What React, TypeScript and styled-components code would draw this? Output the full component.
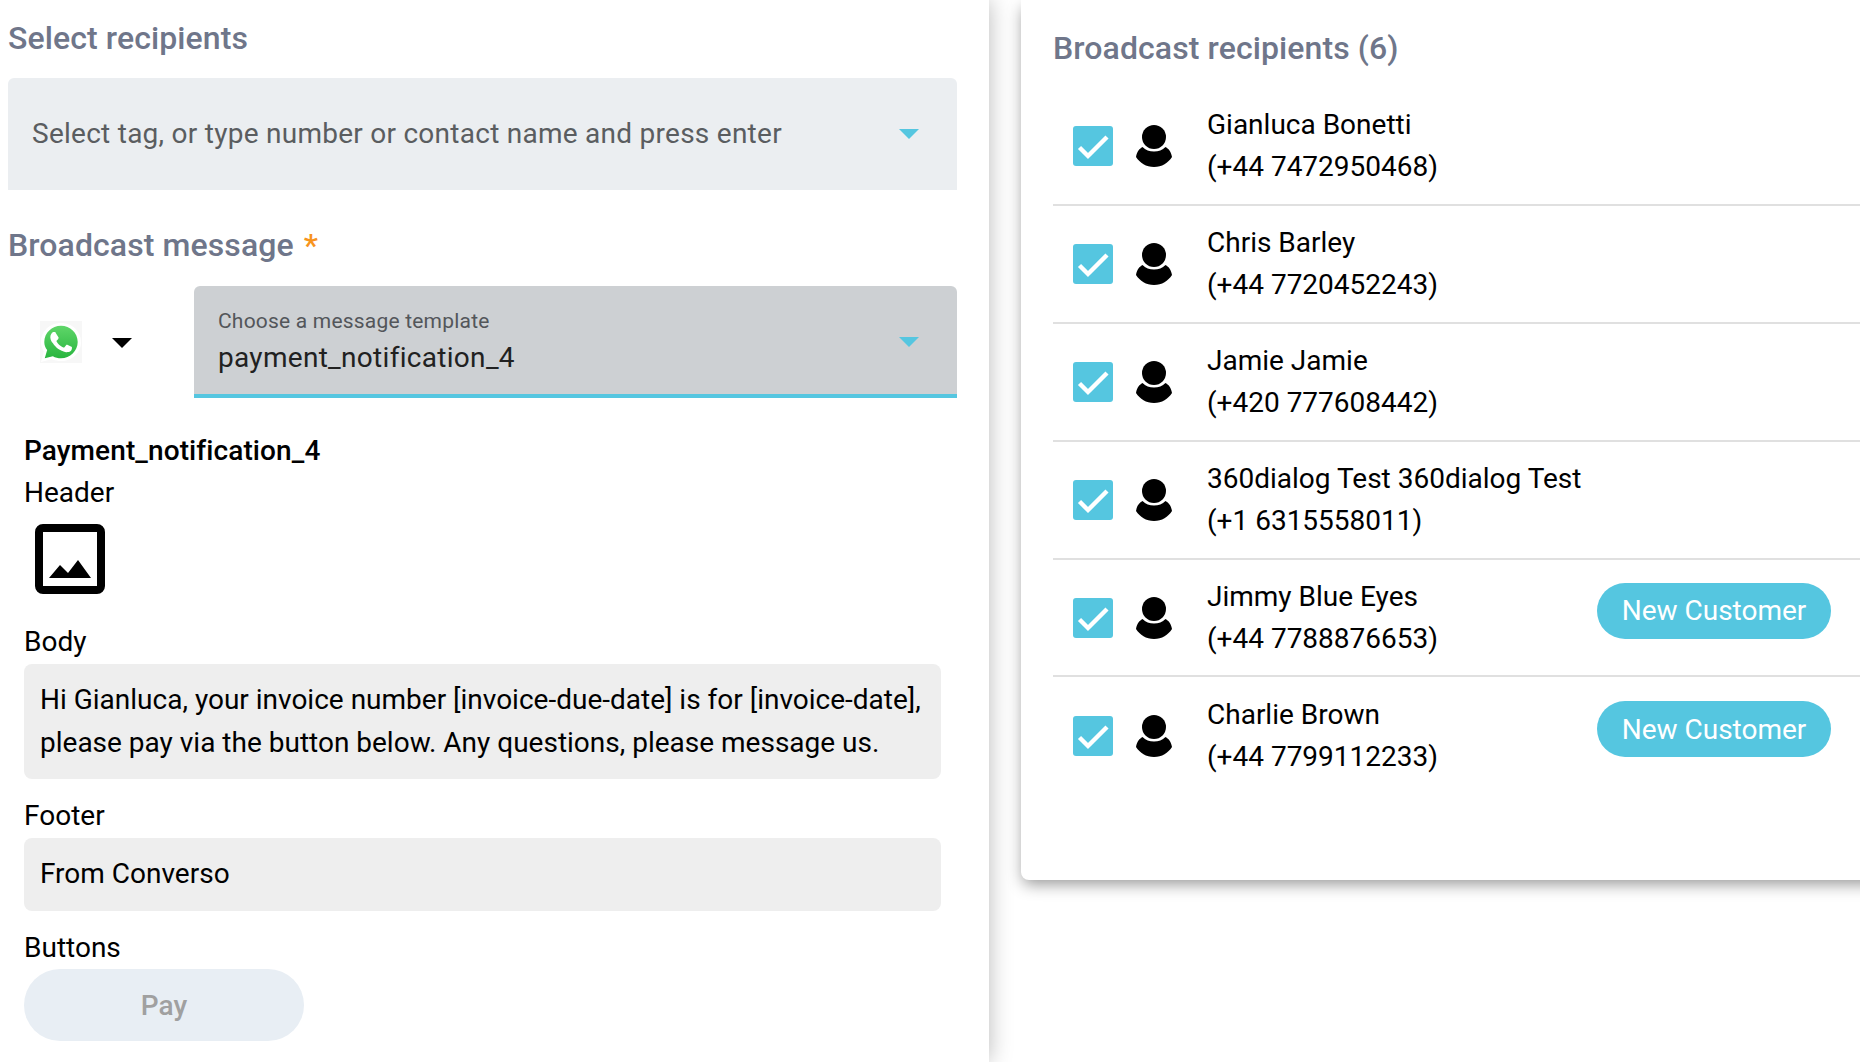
import * as React from 'react';
import styled, { createGlobalStyle } from 'styled-components';

const GlobalStyle = createGlobalStyle`
    html, body {
        margin: 0;
        padding: 0;
        background: #ffffff;
        overflow: hidden;
    }
    body {
        font-family: Roboto, "Liberation Sans", sans-serif;
        color: #000000;
    }
`;

const Page = styled('div')`
    display: flex;
    width: 1860px;
    height: 1062px;
    overflow: hidden;
`;

const LeftPanel = styled('div')`
    width: 989px;
    height: 1062px;
    flex: none;
    box-sizing: border-box;
    padding: 17px 32px 0 8px;
    background: #ffffff;
    box-shadow: 0 0 22px rgba(0, 0, 0, 0.28);
`;

const SectionTitle = styled('h2')`
    margin: 0;
    font-size: 32px;
    line-height: 42px;
    font-weight: 500;
    letter-spacing: 0.1px;
    color: #6f768a;
`;

const Required = styled('span')`
    color: #f7941d;
    margin-left: 10px;
`;

const SelectBox = styled('div')<{ $active?: boolean }>`
    display: flex;
    align-items: center;
    justify-content: space-between;
    height: 112px;
    box-sizing: border-box;
    padding: ${(p) => (p.$active ? '4px' : '0')} 38px 0 24px;
    border-radius: 6px 6px 0 0;
    background: ${(p) => (p.$active ? '#cdd0d3' : '#ebeef1')};
    border-bottom: ${(p) => (p.$active ? '4px solid #55c6e0' : 'none')};
    flex: 1;
`;

const Placeholder = styled('span')`
    font-size: 28px;
    letter-spacing: 0.26px;
    color: #5a5d60;
    padding-bottom: 2px;
`;

const Caret = styled('span')<{ $color?: string; $size?: number }>`
    width: 0;
    height: 0;
    flex: none;
    border-left: ${(p) => p.$size || 10}px solid transparent;
    border-right: ${(p) => p.$size || 10}px solid transparent;
    border-top: ${(p) => p.$size || 10}px solid ${(p) => p.$color || '#55c6e0'};
`;

const ChannelCaret = styled(Caret)`
    margin-top: 2px;
`;

const RecipientsSelect = styled(SelectBox)`
    margin: 19px 0 34px;
`;

const ChannelRow = styled('div')`
    display: flex;
    align-items: center;
    margin-top: 20px;
`;

const ChannelPicker = styled('div')`
    width: 186px;
    flex: none;
    display: flex;
    align-items: center;
    gap: 30px;
    padding-left: 32px;
    box-sizing: border-box;
`;

const TemplateText = styled('div')`
    display: flex;
    flex-direction: column;
    gap: 8px;
    margin-top: -2px;
`;

const TemplateLabel = styled('span')`
    font-size: 21px;
    letter-spacing: 0.2px;
    color: #53565a;
`;

const TemplateValue = styled('span')`
    font-size: 28px;
    letter-spacing: 0.3px;
    color: #212121;
`;

const Preview = styled('div')`
    padding: 35px 16px 0;
`;

const TemplateName = styled('div')`
    font-size: 28px;
    line-height: 36px;
    font-weight: 500;
    letter-spacing: 0.1px;
`;

const FieldLabel = styled('div')`
    font-size: 28px;
    line-height: 36px;
`;

const HeaderLabel = styled(FieldLabel)`
    margin-top: 6px;
`;

const ImageIcon = styled('svg')`
    display: block;
    width: 70px;
    height: 70px;
    margin: 13px 0 30px 11px;
`;

const MessageBox = styled('div')`
    background: #eeeeee;
    border-radius: 8px;
    padding: 15px 16px;
    font-size: 28px;
    line-height: 42.5px;
    box-sizing: border-box;
    margin: 4px 0 19px;
`;

const FooterBox = styled(MessageBox)`
    padding: 15.5px 16px;
    margin-top: 3.5px;
`;

const PayButton = styled('div')`
    width: 280px;
    height: 72px;
    margin-top: 3px;
    border-radius: 36px;
    background: #e8eef4;
    color: #a0a0a0;
    font-size: 28px;
    font-weight: 500;
    display: flex;
    align-items: center;
    justify-content: center;
`;

const RightArea = styled('div')`
    flex: 1;
    min-width: 0;
    padding-left: 32px;
`;

const Card = styled('div')`
    height: 880px;
    width: 900px;
    box-sizing: border-box;
    padding: 27px 0 0 32px;
    border-radius: 0 0 0 8px;
    background: #ffffff;
    box-shadow: 0 6px 16px -2px rgba(0, 0, 0, 0.42);
`;

const RecipientList = styled('div')`
    margin-top: 19px;
    width: 868px;
`;

const RecipientRow = styled('div')`
    display: flex;
    align-items: center;
    height: 117.9px;
    box-sizing: border-box;
    padding-left: 20px;
    border-bottom: 2px solid #e0e0e0;
    &:last-child {
        border-bottom: none;
    }
`;

const CheckBox = styled('div')`
    width: 40px;
    height: 40px;
    flex: none;
    border-radius: 3px;
    background: #55c6e0;
    display: flex;
`;

const PersonIcon = styled('svg')`
    width: 36px;
    height: 42px;
    flex: none;
    margin-left: 23px;
`;

const ContactText = styled('div')`
    margin-left: 35px;
    width: 390px;
    flex: none;
    font-size: 28px;
    line-height: 42px;
`;

const CustomerTag = styled('div')`
    width: 234px;
    height: 56px;
    margin-top: -14px;
    border-radius: 28px;
    background: #55c6e0;
    color: #ffffff;
    font-size: 28px;
    display: flex;
    align-items: center;
    justify-content: center;
`;

const WhatsAppIcon = () => (
    <svg width="42" height="42" viewBox="0 0 44 44">
        <defs>
            <linearGradient id="waGreen" x1="0" y1="0" x2="0" y2="1">
                <stop offset="0" stopColor="#5fd669" />
                <stop offset="1" stopColor="#29b53f" />
            </linearGradient>
        </defs>
        <rect width="44" height="44" fill="#f7f7f7" />
        <path
            d="M1 43l3-11C2 29 1 25 1 22 1 11 10 2 22 2s21 9 21 20-9 20-21 20c-3 0-7-1-10-2z"
            fill="#ffffff"
        />
        <path
            d="M5 39l2.500-8.500C5.500 28 4.500 25 4.500 22 4.500 12.500 12.500 5 22 5s17.500 7.500 17.500 17S31.500 39 22 39c-3 0-6-.8-8.500-2.200z"
            fill="url(#waGreen)"
        />
        <path
            d="M16.500 12.500c-.4-.9-.8-.9-1.200-.9h-1c-.4 0-1 .1-1.500.7-.5.6-2 1.900-2 4.700s2 5.400 2.300 5.800c.3.400 3.900 6.200 9.600 8.400 4.700 1.900 5.700 1.500 6.700 1.400 1-.1 3.300-1.300 3.700-2.600.5-1.300.5-2.400.3-2.600-.1-.2-.5-.4-1-.6l-3.800-1.800c-.5-.2-.9-.3-1.300.3l-1.700 2.200c-.3.400-.6.400-1.100.2-.5-.3-2.200-.8-4.200-2.600-1.500-1.400-2.600-3.100-2.900-3.600-.3-.5 0-.8.2-1l1.300-1.500c.2-.3.300-.5.500-.9.200-.4.100-.7-.1-1z"
            fill="#ffffff"
        />
    </svg>
);

const CheckMark = () => (
    <svg width="40" height="40" viewBox="0 0 40 40">
        <path d="M6.500 21.500l8.500 8.500L34 11" fill="none" stroke="#ffffff" strokeWidth="4.400" />
    </svg>
);

const Person = () => (
    <PersonIcon viewBox="0 0 36 42">
        <circle cx="18" cy="12" r="12" fill="#000000" />
        <path
            d="M6.500 22c3 3 7 4.500 11.500 4.500S26.500 25 29.500 22C33 24 35 26.500 36 32 32 38 26 42 18 42S4 38 0 32c1-5.500 3-8 6.500-10z"
            fill="#000000"
        />
    </PersonIcon>
);

const recipients = [
    { name: 'Gianluca Bonetti', phone: '(+44 7472950468)', isNew: false },
    { name: 'Chris Barley', phone: '(+44 7720452243)', isNew: false },
    { name: 'Jamie Jamie', phone: '(+420 777608442)', isNew: false },
    { name: '360dialog Test 360dialog Test', phone: '(+1 6315558011)', isNew: false },
    { name: 'Jimmy Blue Eyes', phone: '(+44 7788876653)', isNew: true },
    { name: 'Charlie Brown', phone: '(+44 7799112233)', isNew: true },
];

const App: React.FunctionComponent = () => {
    return (
        <Page>
            <GlobalStyle />
            <LeftPanel>
                <SectionTitle>Select recipients</SectionTitle>
                <RecipientsSelect>
                    <Placeholder>Select tag, or type number or contact name and press enter</Placeholder>
                    <Caret />
                </RecipientsSelect>
                <SectionTitle>
                    Broadcast message<Required>*</Required>
                </SectionTitle>
                <ChannelRow>
                    <ChannelPicker>
                        <WhatsAppIcon />
                        <ChannelCaret $color="#000000" />
                    </ChannelPicker>
                    <SelectBox $active>
                        <TemplateText>
                            <TemplateLabel>Choose a message template</TemplateLabel>
                            <TemplateValue>payment_notification_4</TemplateValue>
                        </TemplateText>
                        <Caret />
                    </SelectBox>
                </ChannelRow>
                <Preview>
                    <TemplateName>Payment_notification_4</TemplateName>
                    <HeaderLabel>Header</HeaderLabel>
                    <ImageIcon viewBox="0 0 70 70">
                        <rect x="4" y="4" width="62" height="62" rx="4" fill="none" stroke="#000000" strokeWidth="8" />
                        <path d="M14 54L25 41l8 8 10-13 13 18z" fill="#000000" />
                    </ImageIcon>
                    <FieldLabel>Body</FieldLabel>
                    <MessageBox>
                        Hi Gianluca, your invoice number [invoice-due-date] is for [invoice-date],
                        <br />
                        please pay via the button below. Any questions, please message us.
                    </MessageBox>
                    <FieldLabel>Footer</FieldLabel>
                    <FooterBox>From Converso</FooterBox>
                    <FieldLabel>Buttons</FieldLabel>
                    <PayButton>Pay</PayButton>
                </Preview>
            </LeftPanel>
            <RightArea>
                <Card>
                    <SectionTitle>Broadcast recipients (6)</SectionTitle>
                    <RecipientList>
                        {recipients.map((item, index) => (
                            <RecipientRow key={index}>
                                <CheckBox>
                                    <CheckMark />
                                </CheckBox>
                                <Person />
                                <ContactText>
                                    {item.name}
                                    <br />
                                    {item.phone}
                                </ContactText>
                                {item.isNew && <CustomerTag>New Customer</CustomerTag>}
                            </RecipientRow>
                        ))}
                    </RecipientList>
                </Card>
            </RightArea>
        </Page>
    );
};

export default App;
